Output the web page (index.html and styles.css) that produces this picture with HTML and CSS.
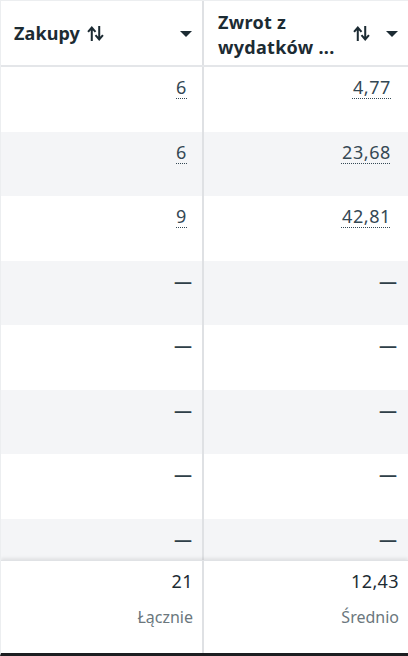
FILE: index.html
```html
<!DOCTYPE html>
<html lang="pl">
<head>
<meta charset="utf-8">
<link rel="stylesheet" href="styles.css">
</head>
<body>
<div class="table">
  <div class="head">
    <div class="hcell c1">
      <span class="htitle">Zakupy</span>
      <svg class="sort" viewBox="0 0 16 14" width="17" height="15"><path d="M4.5 14V2M1 5.5l3.5-4 3.5 4" fill="none" stroke="#1c2b33" stroke-width="1.9"/><path d="M11.5 0v12M8 8.5l3.5 4 3.5-4" fill="none" stroke="#1c2b33" stroke-width="1.9"/></svg>
      <span class="grow"></span>
      <svg class="caret" viewBox="0 0 12 6" width="12" height="6"><path d="M0 0h12L6 6z" fill="#1c2b33"/></svg>
    </div>
    <div class="hcell c2">
      <span class="htitle two">Zwrot z<br>wydatków ...</span>
      <span class="grow"></span>
      <svg class="sort" viewBox="0 0 16 14" width="17" height="15"><path d="M4.5 14V2M1 5.5l3.5-4 3.5 4" fill="none" stroke="#1c2b33" stroke-width="1.9"/><path d="M11.5 0v12M8 8.5l3.5 4 3.5-4" fill="none" stroke="#1c2b33" stroke-width="1.9"/></svg>
      <svg class="caret" viewBox="0 0 12 6" width="12" height="6"><path d="M0 0h12L6 6z" fill="#1c2b33"/></svg>
    </div>
  </div>
  <div class="body">
    <div class="row"><div class="cell c1"><span class="num">6</span></div><div class="cell c2"><span class="num">4,77</span></div></div>
    <div class="row alt"><div class="cell c1"><span class="num">6</span></div><div class="cell c2"><span class="num">23,68</span></div></div>
    <div class="row"><div class="cell c1"><span class="num">9</span></div><div class="cell c2"><span class="num">42,81</span></div></div>
    <div class="row alt"><div class="cell c1"><span class="dash">—</span></div><div class="cell c2"><span class="dash">—</span></div></div>
    <div class="row"><div class="cell c1"><span class="dash">—</span></div><div class="cell c2"><span class="dash">—</span></div></div>
    <div class="row alt"><div class="cell c1"><span class="dash">—</span></div><div class="cell c2"><span class="dash">—</span></div></div>
    <div class="row"><div class="cell c1"><span class="dash">—</span></div><div class="cell c2"><span class="dash">—</span></div></div>
    <div class="row alt short"><div class="cell c1"><span class="dash">—</span></div><div class="cell c2"><span class="dash">—</span></div></div>
  </div>
  <div class="foot">
    <div class="fcell c1"><span class="fval">21</span><span class="flabel">Łącznie</span></div>
    <div class="fcell c2"><span class="fval">12,43</span><span class="flabel">Średnio</span></div>
  </div>
</div>
</body>
</html>
```
FILE: styles.css
```css
* { box-sizing: border-box; }
html, body { margin: 0; padding: 0; background: #fff; }
body {
  font-family: "Noto Sans", "Open Sans", "Liberation Sans", sans-serif;
  color: #1c2b33;
}
.table {
  width: 408px;
  height: 656px;
  display: flex;
  flex-direction: column;
  border-top: 1px solid #eceef0;
  border-left: 1px solid #eceef0;
  border-bottom: 3px solid #1c1e21;
  overflow: hidden;
}
.head {
  display: grid;
  grid-template-columns: 203px 1fr;
  height: 66px;
  flex: none;
  border-bottom: 2px solid #e4e6e9;
}
.hcell {
  display: flex;
  align-items: center;
}
.hcell.c1 {
  padding: 0 10px 0 13px;
  border-right: 2px solid #dfe1e4;
}
.hcell.c1 .sort { margin-left: 7px; }
.hcell.c2 {
  padding: 0 10px 0 14px;
}
.hcell.c2 .sort { margin-right: 16px; }
.htitle {
  font-weight: 700;
  font-size: 18px;
  line-height: 26px;
  color: #1c2b33;
  letter-spacing: 0.1px;
}
.htitle.two { line-height: 25px; margin-top: 3px; letter-spacing: 0.3px; }
.grow { flex: 1; }
.sort { display: block; margin-top: 0; }
.caret { display: block; margin-top: 1px; }
.body { flex: none; }
.row {
  display: grid;
  grid-template-columns: 203px 1fr;
  height: 64.5px;
}
.row.alt { background: #f4f5f7; }
.row.short { height: 41px; }
.cell {
  display: flex;
  justify-content: flex-end;
  align-items: flex-start;
  padding-top: 8px;
  font-size: 18px;
  line-height: 24px;
}
.cell.c1 { padding-right: 10px; border-right: 2px solid #dfe1e4; }
.cell.c2 { padding-right: 11px; }
.num {
  margin-right: 5px;
  color: #344854;
  letter-spacing: 0.6px;
  text-decoration: underline dotted #344854;
  text-decoration-thickness: 1px;
  text-underline-offset: 4px;
}
.cell.c2 .num { margin-right: 6px; }
.dash { color: #2f3f48; font-weight: 600; }
.foot {
  flex: 1;
  display: grid;
  grid-template-columns: 203px 1fr;
  border-top: 1px solid #e0e2e5;
  box-shadow: 0 -2px 3px rgba(0,0,0,0.08);
  position: relative;
}
.fcell {
  display: flex;
  flex-direction: column;
  align-items: flex-end;
  padding-top: 8px;
}
.fcell.c1 { padding-right: 9px; border-right: 2px solid #dfe1e4; }
.fcell.c2 { padding-right: 9px; }
.fval { font-size: 18px; line-height: 24px; color: #1c2b33; letter-spacing: 0.4px; }
.flabel { font-size: 16px; line-height: 24px; color: #6b777d; margin-top: 12px; }
```
